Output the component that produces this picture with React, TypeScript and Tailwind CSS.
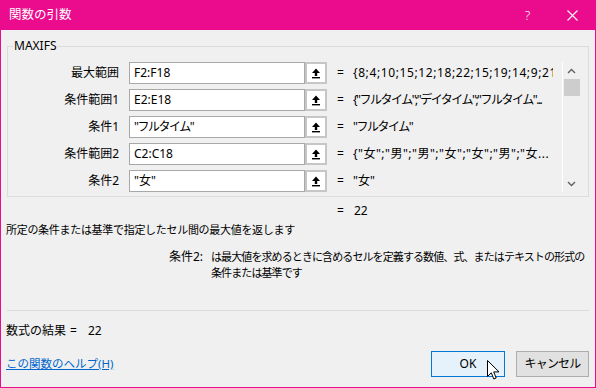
import React from "react"

const rows = [
  {
    label: "最大範囲",
    input: "F2:F18",
    inputCls: "",
    value: "{8;4;10;15;12;18;22;15;19;14;9;21;17}",
    valueCls: "tracking-[0.6px]",
  },
  {
    label: "条件範囲1",
    input: "E2:E18",
    inputCls: "",
    value: "{\"フルタイム\";\"デイタイム\";\"フルタイム\"...",
    valueCls: "tracking-[-1.5px]",
  },
  {
    label: "条件1",
    input: "\"フルタイム\"",
    inputCls: "tracking-[-1.5px]",
    value: "\"フルタイム\"",
    valueCls: "tracking-[-1.5px]",
  },
  {
    label: "条件範囲2",
    input: "C2:C18",
    inputCls: "",
    value: "{\"女\";\"男\";\"男\";\"女\";\"女\";\"男\";\"女...",
    valueCls: "tracking-[0.5px]",
  },
  { label: "条件2", input: "\"女\"", inputCls: "", value: "\"女\"", valueCls: "" },
]

function CollapseIcon() {
  return (
    <svg width="10" height="11" viewBox="0 0 10 11" fill="#000">
      <path d="M5 0.5L9 5H6.2V8H3.8V5H1Z" />
      <rect x="1" y="9" width="8" height="1.4" />
    </svg>
  )
}

function Chevron({ up }: { up?: boolean }) {
  return (
    <svg width="9" height="6" viewBox="0 0 9 6" fill="none" stroke="#606060" strokeWidth="1.4">
      <path d={up ? "M1 5L4.5 1.5L8 5" : "M1 1L4.5 4.5L8 1"} />
    </svg>
  )
}

export default function App() {
  return (
    <div
      className="relative w-[596px] h-[388px] border border-[#ea0c8c] bg-[#f0f0f0] flex flex-col text-[12px] text-black"
      style={{ fontFamily: '"Noto Sans", "Noto Sans CJK JP", sans-serif' }}
    >
      {/* Title bar */}
      <div className="h-[29px] bg-[#ea0c8c] flex items-center text-white shrink-0">
        <span className="pl-[8px] flex-1 leading-none text-[12.5px]">関数の引数</span>
        <span className="w-[45px] text-center text-[13px] leading-none font-light">?</span>
        <span className="w-[45px] flex justify-center">
          <svg width="11" height="11" viewBox="0 0 11 11" stroke="#fff" strokeWidth="1.1">
            <path d="M0.5 0.5L10.5 10.5M10.5 0.5L0.5 10.5" />
          </svg>
        </span>
      </div>

      <div className="flex flex-col px-[6px]">
        {/* Group box */}
        <div className="relative mt-[16px] border border-[#dcdcdc] flex pt-[15px] pb-[4px] pr-[6px]">
          <span className="absolute -top-[9px] left-[5px] px-[1px] bg-[#f0f0f0] leading-[16px]">MAXIFS</span>
          <div className="flex flex-col gap-[5px] w-[545px] shrink-0">
            {rows.map((r) => (
              <div key={r.label} className="flex items-center h-[22px]">
                <span className="w-[111px] shrink-0 text-right leading-[16px]">{r.label}</span>
                <div
                  className={`ml-[10px] w-[176px] shrink-0 h-[22px] bg-white border border-[#a8a8a8] flex items-center pl-[4px] leading-[16px] whitespace-nowrap overflow-hidden ${r.inputCls}`}
                >
                  {r.input}
                </div>
                <div className="w-[22px] h-[22px] shrink-0 border-2 border-[#c6c6c6] bg-white flex items-center justify-center">
                  <CollapseIcon />
                </div>
                <span className="ml-[10px] w-[16px] shrink-0 leading-[16px]">=</span>
                <span className={`w-[200px] shrink-0 whitespace-nowrap overflow-hidden leading-[16px] ${r.valueCls}`}>
                  {r.value}
                </span>
              </div>
            ))}
          </div>
          {/* Scrollbar */}
          <div className="ml-[9px] w-[18px] border-l border-white flex flex-col items-center">
            <div className="h-[17px] flex items-center justify-center">
              <Chevron up />
            </div>
            <div className="w-[16px] h-[17px] bg-[#cdcdcd]" />
            <div className="flex-1" />
            <div className="h-[16px] flex items-center justify-center">
              <Chevron />
            </div>
          </div>
        </div>

        <div className="mt-[6px] h-[16px] flex items-center pl-[330px] leading-[16px]">
          <span className="w-[17px]">=</span>
          <span>22</span>
        </div>

        <div className="mt-[3px] h-[16px] leading-[16px] -ml-[1px] whitespace-nowrap text-[11px] tracking-[-0.3px]">
          所定の条件または基準で指定したセル間の最大値を返します
        </div>

        <div className="mt-[11px] flex leading-[16px]">
          <span className="ml-[162px] w-[42px] shrink-0 whitespace-nowrap">条件2:</span>
          <div className="flex flex-col whitespace-nowrap text-[11px] tracking-[-0.9px]">
            <span>は最大値を求めるときに含めるセルを定義する数値、式、またはテキストの形式の</span>
            <span>条件または基準です</span>
          </div>
        </div>

        <div className="mt-[29px] border-t border-[#dadada]" />

        <div className="mt-[12px] h-[16px] flex items-center leading-[16px] -ml-[1px]">
          <span className="w-[64px] whitespace-nowrap">数式の結果</span>
          <span className="w-[18px]">=</span>
          <span>22</span>
        </div>

        <div className="mt-[12px] h-[26px] flex items-center">
          <span className="flex-1 text-[#0066cc] underline leading-[16px] -ml-[1px] text-[11.5px]">この関数のヘルプ(H)</span>
          <button className="w-[74px] h-[26px] border border-[#0078d7] bg-[#e5f1fb] flex items-center justify-center leading-[16px]">
            OK
          </button>
          <button className="ml-[11px] w-[73px] h-[26px] border border-[#adadad] bg-[#e1e1e1] flex items-center justify-center leading-[16px] tracking-[-0.8px]">
            キャンセル
          </button>
        </div>
      </div>

      {/* Mouse pointer */}
      <svg className="absolute left-[486px] top-[359px]" width="13" height="21" viewBox="0 0 13 21">
        <path d="M0.5 0.5V16.5L4.3 12.8L6.8 19L9.2 18L6.7 11.9H12Z" fill="#fff" stroke="#000" strokeWidth="1" />
      </svg>
    </div>
  )
}
